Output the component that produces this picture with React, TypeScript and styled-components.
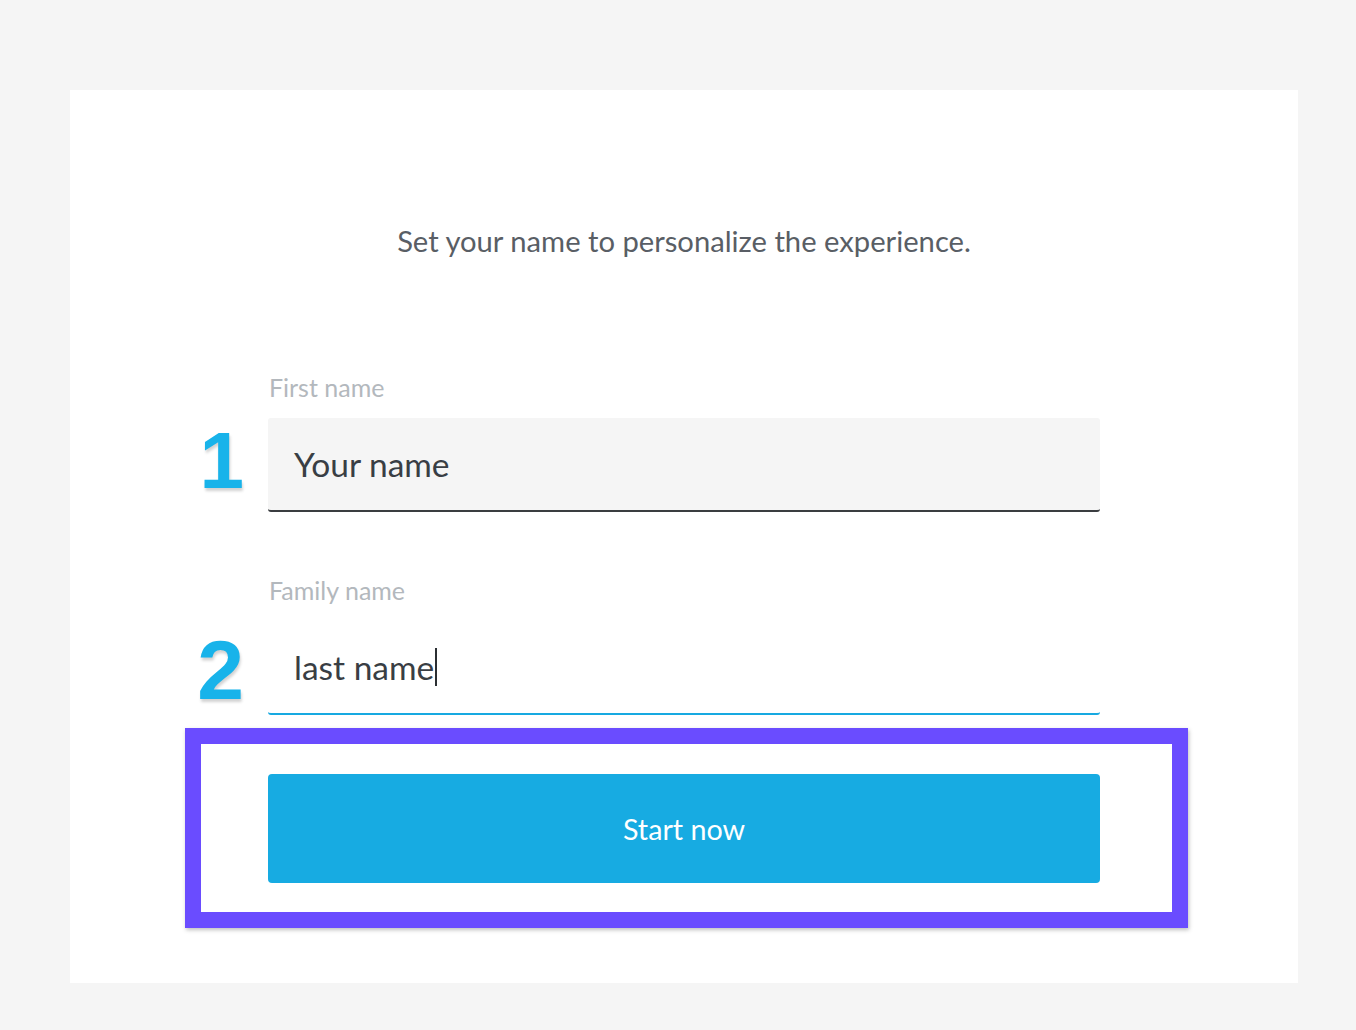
import React from "react";
import styled, { createGlobalStyle } from "styled-components";

const Global = createGlobalStyle`
  html, body { margin: 0; padding: 0; background: #f5f5f5; }
  body { font-family: Lato, "Open Sans", sans-serif; }
`;

const Page = styled.div`
  width: 1356px;
  min-height: 1030px;
  padding-top: 90px;
  box-sizing: border-box;
`;

const Card = styled.div`
  margin-left: 70px;
  width: 1228px;
  height: 893px;
  background: #ffffff;
  box-sizing: border-box;
  padding-top: 133px;
  display: flex;
  flex-direction: column;
`;

const Heading = styled.p`
  margin: 0;
  text-align: center;
  font-size: 29.2px;
  line-height: 36px;
  color: #595e65;
`;

const Form = styled.div`
  margin-top: 113px;
  margin-left: 118px;
  display: grid;
  grid-template-columns: 80px 832px;
  align-items: center;
`;

const Label = styled.div<{ $gap?: number }>`
  grid-column: 2;
  font-size: 25px;
  line-height: 30px;
  color: #b3b8bd;
  margin-top: ${(p) => p.$gap ?? 0}px;
  margin-bottom: 16px;
  padding-left: 1px;
`;

const StepNumber = styled.div<{ $shift?: number; $size: number }>`
  grid-column: 1;
  justify-self: end;
  padding-right: 24px;
  font-family: "Liberation Sans", Arial, sans-serif;
  font-weight: 700;
  font-size: ${(p) => p.$size}px;
  line-height: 1;
  color: #18b3ea;
  text-shadow: 1px 3px 3px rgba(0, 0, 0, 0.18);
  margin-top: ${(p) => p.$shift ?? 0}px;
`;

const InputBox = styled.div<{ $active?: boolean }>`
  grid-column: 2;
  height: 94px;
  box-sizing: border-box;
  display: flex;
  align-items: center;
  padding-left: 26px;
  font-size: 33.5px;
  line-height: 40px;
  color: #393e44;
  background: ${(p) => (p.$active ? "#ffffff" : "#f5f5f5")};
  border-bottom: 2px solid ${(p) => (p.$active ? "#17a9e1" : "#3a3d40")};
  border-radius: 3px;
`;

const Caret = styled.span`
  display: inline-block;
  width: 2px;
  height: 38px;
  background: #2b2f33;
  margin-left: 1px;
`;

const Highlight = styled.div`
  grid-column: 1 / -1;
  margin-top: 13px;
  margin-left: -3px;
  margin-right: -88px;
  border: 16px solid #6a4cff;
  background: #ffffff;
  box-shadow: 1px 2px 4px rgba(0, 0, 0, 0.25);
  padding: 30px 72px 29px 67px;
`;

const StartButton = styled.button`
  display: block;
  width: 832px;
  height: 109px;
  border: none;
  border-radius: 4px;
  background: #17abe2;
  color: #ffffff;
  font-family: Lato, "Open Sans", sans-serif;
  font-size: 28.7px;
  cursor: pointer;
`;

export default function App() {
  return (
    <>
      <Global />
      <Page>
        <Card>
          <Heading>Set your name to personalize the experience.</Heading>
          <Form>
            <Label>First name</Label>
            <StepNumber $size={80} $shift={-8}>1</StepNumber>
            <InputBox>Your name</InputBox>
            <Label $gap={63}>Family name</Label>
            <StepNumber $size={84} $shift={4}>2</StepNumber>
            <InputBox $active>
              last name
              <Caret />
            </InputBox>
            <Highlight>
              <StartButton>Start now</StartButton>
            </Highlight>
          </Form>
        </Card>
      </Page>
    </>
  );
}
